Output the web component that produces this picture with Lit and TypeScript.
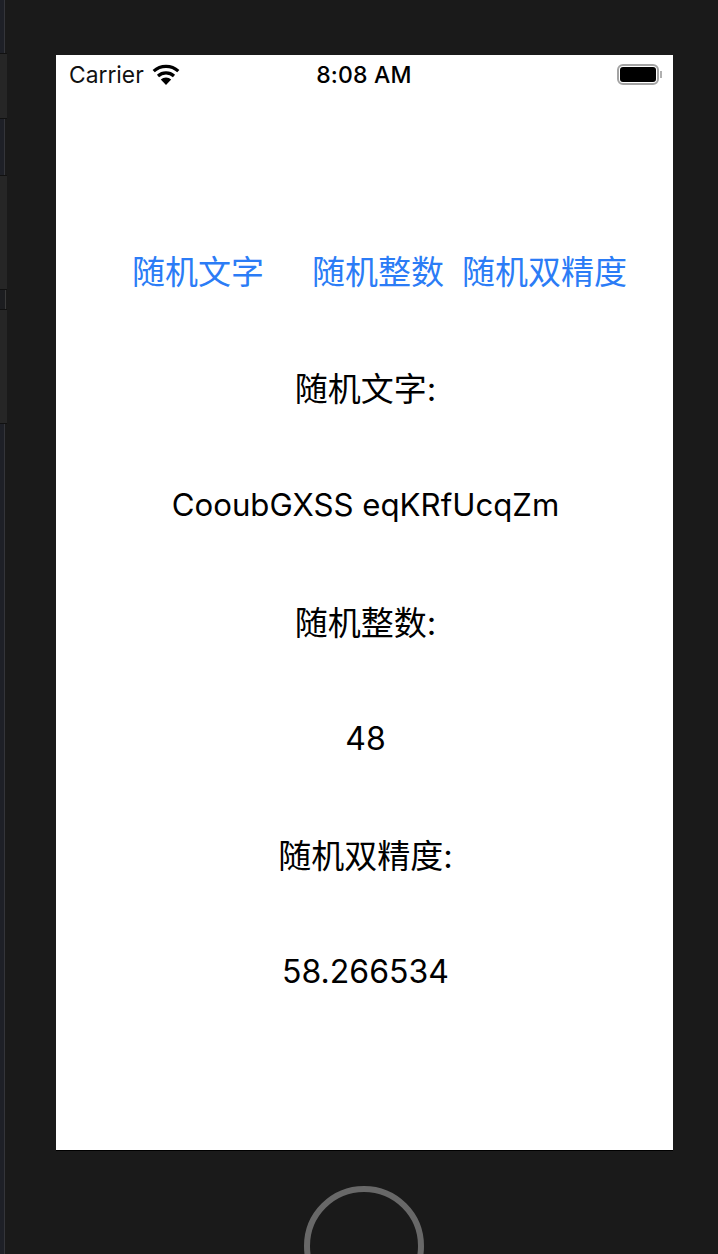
import { LitElement, html, css } from "lit";
import { customElement } from "lit/decorators.js";

@customElement("app-root")
export class AppRoot extends LitElement {
  static styles = css`
    :host {
      display: flex;
      width: 718px;
      height: 1254px;
      overflow: hidden;
      background: #1a1a1a;
      font-family: Inter, "Noto Sans CJK SC", sans-serif;
      color: #000;
    }
    .strip { width: 7px; flex: none; display: flex; flex-direction: column; }
    .blue { background: #1e2027; width: 4px; border-right: 1px solid #34353a; }
    .panel { background: #262626; width: 7px; border-top: 1px solid #111; border-bottom: 1px solid #111; box-sizing: border-box; }
    .thin { height: 19px; width: 6px; background: #1c1d20; border-right: 1px solid #3a3a3a; box-sizing: border-box; }
    .b1 { height: 53px; } .p1 { height: 66px; } .b2 { height: 56px; }
    .p2 { height: 115px; } .p3 { height: 115px; } .b3 { flex: 1; }
    .main { flex: 1; display: flex; flex-direction: column; padding: 55px 45px 0 49px; min-width: 0; }
    .screen {
      height: 1096px;
      background: #fff;
      border-bottom: 1px solid #000;
      box-sizing: border-box;
      display: flex;
      flex-direction: column;
      flex: none;
    }
    .status {
      height: 40px;
      display: grid;
      grid-template-columns: 1fr auto 1fr;
      align-items: center;
      padding: 0 11px 0 13px;
      font-size: 22.8px;
      line-height: 40px;
    }
    .left { display: flex; align-items: center; gap: 8px; color: #111; }
    .left svg { display: block; width: 28px; height: 22px; margin-top: -1px; }
    .time { font-weight: 550; font-size: 23px; letter-spacing: 0.2px; margin-right: 3px; }
    .right { display: flex; justify-content: flex-end; align-items: center; gap: 1px; }
    .battery {
      width: 42px; height: 21px; box-sizing: border-box;
      border: 2px solid #a3a3a3; border-radius: 6px; padding: 1px;
      margin-top: -1px;
    }
    .battery i { display: block; width: 100%; height: 100%; background: #000; border-radius: 3px; }
    .cap { width: 2px; height: 7px; background: #b0b0b0; margin-top: -1px; }
    .buttons {
      display: grid;
      grid-template-columns: 180px 150px auto;
      justify-content: start;
      padding-left: 76px;
      margin-top: 153px;
    }
    button {
      all: unset;
      font-size: 33px;
      line-height: 48px;
      color: #2b7cf6;
      white-space: nowrap;
    }
    .lines { display: flex; flex-direction: column; align-items: center; margin-top: 34px; padding-left: 2px; }
    .line { height: 116.7px; display: flex; align-items: center; justify-content: center; font-size: 31.2px; white-space: nowrap; }
    .line.cjk { font-size: 33px; padding-bottom: 2px; height: 114.7px; }
    .line.num { font-size: 32px; }
    .home {
      flex: none;
      width: 120px; height: 120px; box-sizing: border-box;
      border: 6px solid #686868; border-radius: 50%;
      margin: 35px 0 0 248px;
    }
  `;

  render() {
    return html`
      <div class="strip">
        <div class="blue b1"></div>
        <div class="panel p1"></div>
        <div class="blue b2"></div>
        <div class="panel p2"></div>
        <div class="thin"></div>
        <div class="panel p3"></div>
        <div class="blue b3"></div>
      </div>
      <div class="main">
        <div class="screen">
          <div class="status">
            <div class="left">
              <span>Carrier</span>
              <svg viewBox="0 0 28 22">
                <path d="M1.7 7.2A18 18 0 0 1 26.3 7.2" fill="none" stroke="#000" stroke-width="3.2" />
                <path d="M6 12A12 12 0 0 1 22 12" fill="none" stroke="#000" stroke-width="3.2" />
                <path d="M14 21L8.8 15.6A7.6 7.6 0 0 1 19.2 15.6Z" fill="#000" />
              </svg>
            </div>
            <div class="time">8:08 AM</div>
            <div class="right">
              <div class="battery"><i></i></div>
              <div class="cap"></div>
            </div>
          </div>
          <div class="buttons">
            <button>随机文字</button>
            <button>随机整数</button>
            <button>随机双精度</button>
          </div>
          <div class="lines">
            <div class="line cjk">随机文字:</div>
            <div class="line">CooubGXSS eqKRfUcqZm</div>
            <div class="line cjk">随机整数:</div>
            <div class="line num">48</div>
            <div class="line cjk">随机双精度:</div>
            <div class="line num">58.266534</div>
          </div>
        </div>
        <div class="home"></div>
      </div>
    `;
  }
}
